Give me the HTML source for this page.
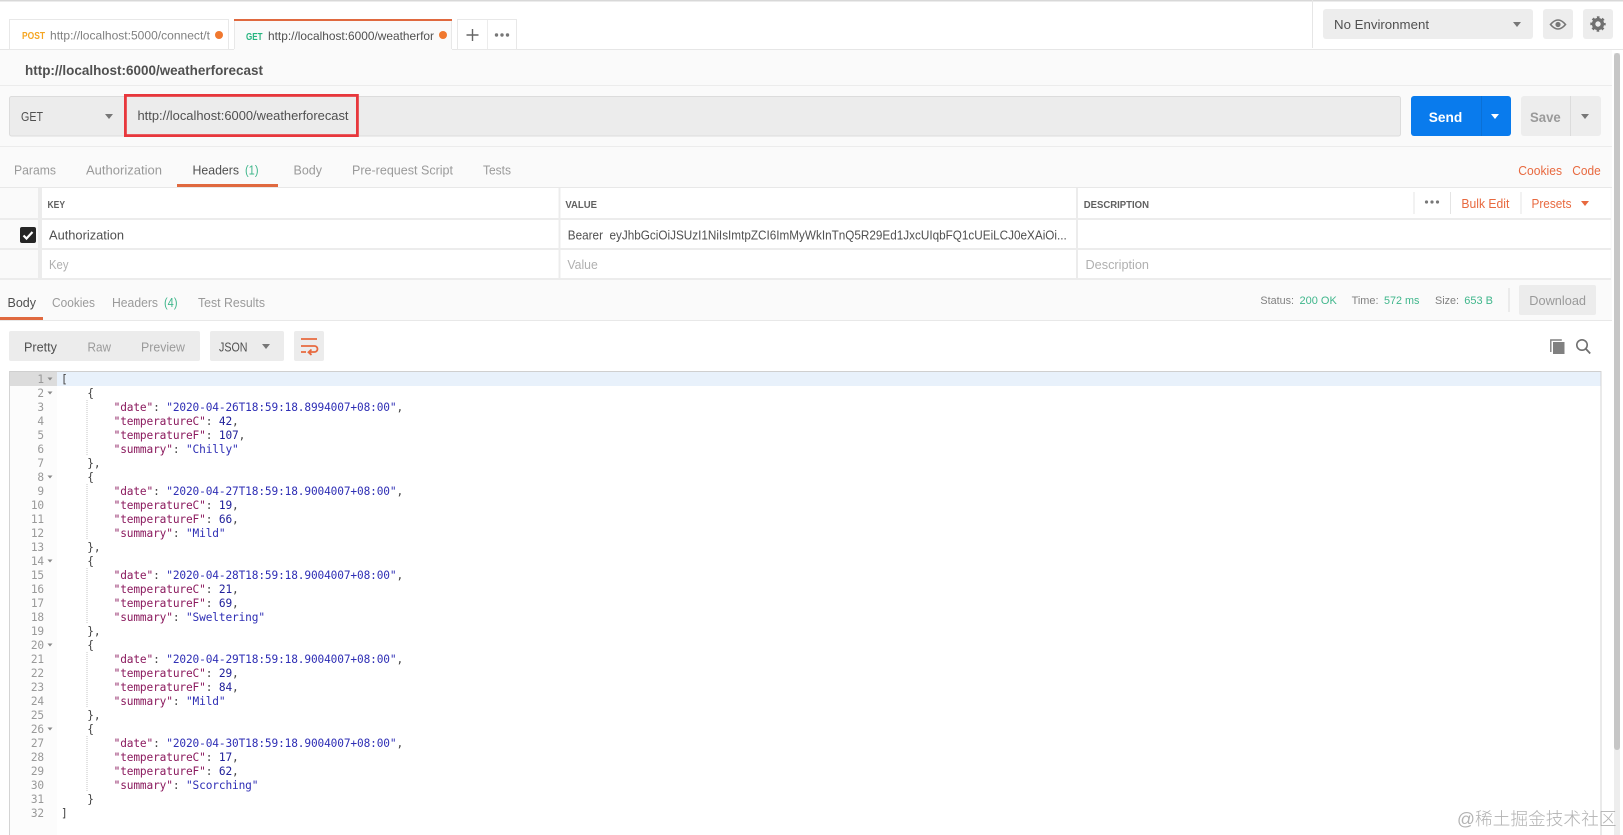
<!DOCTYPE html>
<html><head><meta charset="utf-8"><title>Postman</title>
<style>
html,body{margin:0;padding:0;width:1623px;height:835px;overflow:hidden;background:#fafafa}
body{filter:blur(.3px)}
svg{position:absolute;left:0;top:0}
text{font-family:"Liberation Sans",sans-serif;font-size:12.5px;fill:#808080;white-space:pre}
.d{fill:#505050}.l{fill:#b0b0b0}.m{fill:#9a9a9a}.o{fill:#e8693f}.g{fill:#3fb68b}
.h{font-size:10.5px;font-weight:bold;fill:#606060}
pre{position:absolute;margin:0;font-family:"DejaVu Sans Mono",monospace;font-size:11.15px;letter-spacing:-.13px;line-height:14px;top:373px;color:#444}
#n{left:9px;width:35px;text-align:right;color:#999}
#c{left:61px}
.k{color:#8b1a5e}.s{color:#2f2fb5}.v{color:#20209a}
#w{position:absolute;left:1457px;top:807px;font-family:"Liberation Sans","Noto Sans CJK SC",sans-serif;font-size:17.7px;line-height:24px;color:rgba(130,130,130,.62);white-space:nowrap;font-weight:300}
</style></head><body>
<svg width="1623" height="835" viewBox="0 0 1623 835">
<rect width="1623" height="835" fill="#fafafa"/>
<rect width="1623" height="49" fill="#fff"/>
<rect width="1623" height="1.5" fill="#d8d8d8"/>
<rect y="49" width="1623" height="1" fill="#e6e6e6"/>
<rect x="1312" y="0" width="1" height="48" fill="#e6e6e6"/>
<!-- tabs -->
<rect x="9.5" y="19.5" width="219" height="30" fill="#fff" stroke="#e8e8e8"/>
<rect x="234" y="19" width="218" height="31" fill="#fafafa"/>
<rect x="234" y="19" width="218" height="2" fill="#e0693f"/>
<rect x="234" y="21" width="1" height="28" fill="#e8e8e8"/><rect x="451" y="21" width="1" height="28" fill="#e8e8e8"/>
<rect x="457.5" y="19.5" width="59" height="30" fill="#fff" stroke="#e8e8e8"/>
<rect x="487" y="20" width="1" height="29" fill="#ececec"/>
<text x="22" y="39" font-weight="bold" style="font-size:10px;font-weight:bold;fill:#f5a623" textLength="23" lengthAdjust="spacingAndGlyphs">POST</text>
<text x="50" y="39.5" style="font-size:12px" textLength="160" lengthAdjust="spacingAndGlyphs">http://localhost:5000/connect/t</text>
<circle cx="219" cy="35" r="4" fill="#f0782f"/>
<text x="246" y="40" style="font-size:10px;font-weight:bold;fill:#26b47f" textLength="16.5" lengthAdjust="spacingAndGlyphs">GET</text>
<text x="268" y="40" class="d" style="font-size:12px" textLength="166" lengthAdjust="spacingAndGlyphs">http://localhost:6000/weatherfor</text>
<circle cx="443" cy="35" r="4" fill="#f0782f"/>
<path d="M472.5 29v12M466.5 35h12" stroke="#666" stroke-width="1.4" fill="none"/>
<g fill="#777"><circle cx="496.5" cy="35" r="1.7"/><circle cx="502" cy="35" r="1.7"/><circle cx="507.5" cy="35" r="1.7"/></g>
<!-- env -->
<rect x="1323" y="9" width="210" height="30" rx="3" fill="#ededed"/>
<text x="1334" y="29" class="d" style="font-size:12.5px" textLength="95" lengthAdjust="spacingAndGlyphs">No Environment</text>
<path d="M1513 22h8l-4 5z" fill="#777"/>
<rect x="1543" y="9" width="30" height="30" rx="3" fill="#ededed"/>
<path d="M1550.5 24.5Q1558 15.5 1565.5 24.5Q1558 33.5 1550.5 24.5Z" fill="none" stroke="#777" stroke-width="1.6"/><circle cx="1558" cy="24.5" r="2.6" fill="#777"/>
<rect x="1583" y="9" width="30" height="30" rx="3" fill="#ededed"/>
<circle cx="1598" cy="24" r="4.4" fill="none" stroke="#707070" stroke-width="3.4"/>
<circle cx="1598" cy="24" r="6.7" fill="none" stroke="#707070" stroke-width="2" stroke-dasharray="2.63 2.63" stroke-dashoffset="1.3"/>
<!-- title -->
<text x="25" y="75" style="font-size:13.5px;font-weight:bold;fill:#505050" textLength="238" lengthAdjust="spacingAndGlyphs">http://localhost:6000/weatherforecast</text>
<rect y="85" width="1612" height="1" fill="#ececec"/>
<!-- url row -->
<rect x="9.5" y="96.5" width="1391" height="39.5" rx="2" fill="#ececec" stroke="#dcdcdc"/>
<text x="21" y="121" class="d" style="font-size:13px" textLength="22" lengthAdjust="spacingAndGlyphs">GET</text>
<path d="M105 114h8l-4 5z" fill="#777"/>
<rect x="125.4" y="95.4" width="232" height="40.2" fill="none" stroke="#e8373c" stroke-width="2.8"/>
<text x="137.5" y="120" class="d" style="font-size:12.5px" textLength="211" lengthAdjust="spacingAndGlyphs">http://localhost:6000/weatherforecast</text>
<rect x="1411" y="96" width="100" height="40" rx="3" fill="#097bed"/>
<rect x="1481" y="96" width="1" height="40" fill="#0a70d6"/>
<text x="1428.7" y="122" style="font-size:14px;font-weight:bold;fill:#fff" textLength="33.5" lengthAdjust="spacingAndGlyphs">Send</text>
<path d="M1491 114h8l-4 5z" fill="#fff"/>
<rect x="1521" y="96" width="80" height="40" rx="3" fill="#ededed"/>
<rect x="1570" y="96" width="1" height="40" fill="#dcdcdc"/>
<text x="1530" y="122" style="font-size:14px;font-weight:bold;fill:#9a9a9a" textLength="30.7" lengthAdjust="spacingAndGlyphs">Save</text>
<path d="M1581 114h8l-4 5z" fill="#777"/>
<rect y="146" width="1612" height="1" fill="#ececec"/>
<!-- request tabs -->
<text x="14" y="174.5" class="m" textLength="42" lengthAdjust="spacingAndGlyphs">Params</text>
<text x="86" y="174.5" class="m" textLength="76" lengthAdjust="spacingAndGlyphs">Authorization</text>
<text x="192.5" y="174.5" class="d" textLength="46.5" lengthAdjust="spacingAndGlyphs">Headers</text>
<text x="245" y="174.5" class="g" textLength="13.5" lengthAdjust="spacingAndGlyphs">(1)</text>
<text x="293.5" y="174.5" class="m" textLength="28.5" lengthAdjust="spacingAndGlyphs">Body</text>
<text x="352" y="174.5" class="m" textLength="101" lengthAdjust="spacingAndGlyphs">Pre-request Script</text>
<text x="483" y="174.5" class="m" textLength="28" lengthAdjust="spacingAndGlyphs">Tests</text>
<text x="1518.3" y="175" class="o" textLength="43.7" lengthAdjust="spacingAndGlyphs">Cookies</text>
<text x="1572.3" y="175" class="o" textLength="28.4" lengthAdjust="spacingAndGlyphs">Code</text>
<rect y="187" width="1612" height="1" fill="#e8e8e8"/>
<rect x="177" y="184" width="101" height="3" fill="#e0693f"/>
<!-- table -->
<rect x="42" y="188" width="1568.5" height="30" fill="#fff"/>
<rect x="42" y="220" width="1568.5" height="28" fill="#fff"/>
<rect x="42" y="250" width="1568.5" height="28" fill="#fff"/>
<rect x="0" y="218" width="1611" height="2" fill="#ececec"/>
<rect x="0" y="248" width="1611" height="2" fill="#ececec"/>
<rect x="0" y="278" width="1611" height="2" fill="#ececec"/>
<rect x="38" y="188" width="4" height="92" fill="#ececec"/>
<rect x="558.5" y="188" width="2" height="92" fill="#ececec"/>
<rect x="1076" y="188" width="2" height="92" fill="#ececec"/>
<text x="47.5" y="208" class="h" textLength="17.5" lengthAdjust="spacingAndGlyphs">KEY</text>
<text x="565.4" y="208" class="h" textLength="31.6" lengthAdjust="spacingAndGlyphs">VALUE</text>
<text x="1083.7" y="208" class="h" textLength="65.3" lengthAdjust="spacingAndGlyphs">DESCRIPTION</text>
<rect x="1413.5" y="192" width="1" height="22" fill="#e4e4e4"/>
<rect x="1450" y="192" width="1" height="22" fill="#e4e4e4"/>
<rect x="1520.5" y="192" width="1" height="22" fill="#e4e4e4"/>
<g fill="#777"><circle cx="1426.5" cy="202" r="1.6"/><circle cx="1432" cy="202" r="1.6"/><circle cx="1437.5" cy="202" r="1.6"/></g>
<text x="1461.4" y="208" class="o" textLength="48" lengthAdjust="spacingAndGlyphs">Bulk Edit</text>
<text x="1531.5" y="208" class="o" textLength="40" lengthAdjust="spacingAndGlyphs">Presets</text>
<path d="M1581 201h8l-4 5z" fill="#e8693f"/>
<rect x="20" y="227" width="16" height="16" rx="2" fill="#262626"/>
<path d="M23.5 235.5l3 3 6-6.5" stroke="#fff" stroke-width="2.2" fill="none"/>
<text x="49" y="239.5" class="d" textLength="75" lengthAdjust="spacingAndGlyphs">Authorization</text>
<text x="567.8" y="239.5" class="d" textLength="499" lengthAdjust="spacingAndGlyphs">Bearer  eyJhbGciOiJSUzI1NiIsImtpZCI6ImMyWkInTnQ5R29Ed1JxcUIqbFQ1cUEiLCJ0eXAiOi...</text>
<text x="49" y="269" class="l" textLength="19.5" lengthAdjust="spacingAndGlyphs">Key</text>
<text x="567.4" y="269" class="l" textLength="30.4" lengthAdjust="spacingAndGlyphs">Value</text>
<text x="1085.5" y="269" class="l" textLength="63.5" lengthAdjust="spacingAndGlyphs">Description</text>
<!-- response tabs -->
<text x="7.5" y="307" class="d" textLength="28.5" lengthAdjust="spacingAndGlyphs">Body</text>
<text x="52" y="307" class="m" textLength="43" lengthAdjust="spacingAndGlyphs">Cookies</text>
<text x="112" y="307" class="m" textLength="46" lengthAdjust="spacingAndGlyphs">Headers</text>
<text x="164" y="307" class="g" textLength="13.5" lengthAdjust="spacingAndGlyphs">(4)</text>
<text x="198" y="307" class="m" textLength="67" lengthAdjust="spacingAndGlyphs">Test Results</text>
<text x="1260.4" y="304" class="m" style="font-size:11px;fill:#808080" textLength="33.6" lengthAdjust="spacingAndGlyphs">Status:</text>
<text x="1299.5" y="304" class="g" style="font-size:11px" textLength="37.3" lengthAdjust="spacingAndGlyphs">200 OK</text>
<text x="1351.6" y="304" style="font-size:11px" textLength="26.9" lengthAdjust="spacingAndGlyphs">Time:</text>
<text x="1384" y="304" class="g" style="font-size:11px" textLength="35.4" lengthAdjust="spacingAndGlyphs">572 ms</text>
<text x="1435" y="304" style="font-size:11px" textLength="24" lengthAdjust="spacingAndGlyphs">Size:</text>
<text x="1464.3" y="304" class="g" style="font-size:11px" textLength="28.7" lengthAdjust="spacingAndGlyphs">653 B</text>
<rect x="1508.5" y="288" width="1" height="24" fill="#dcdcdc"/>
<rect x="1519" y="285" width="77" height="30" rx="2" fill="#ececec"/>
<text x="1529.3" y="305" class="m" textLength="56.7" lengthAdjust="spacingAndGlyphs">Download</text>
<rect y="320" width="1612" height="1" fill="#e8e8e8"/>
<rect x="0" y="317" width="43" height="3" fill="#e0693f"/>
<!-- body area -->
<rect x="0" y="321" width="1612" height="514" fill="#fff"/>
<rect x="9" y="331" width="191" height="30" rx="2" fill="#ececec"/>
<text x="24" y="351.5" class="d" textLength="33" lengthAdjust="spacingAndGlyphs">Pretty</text>
<text x="87.5" y="351.5" class="m" textLength="23.5" lengthAdjust="spacingAndGlyphs">Raw</text>
<text x="141" y="351.5" class="m" textLength="44" lengthAdjust="spacingAndGlyphs">Preview</text>
<rect x="210" y="331" width="74" height="30" rx="2" fill="#ececec"/>
<text x="219" y="351.5" class="d" textLength="28.5" lengthAdjust="spacingAndGlyphs">JSON</text>
<path d="M262 344h8l-4 5z" fill="#777"/>
<rect x="294" y="331" width="30" height="30" rx="2" fill="#ececec"/>
<path d="M301 339h16M301 346h13.5a3 3 0 0 1 0 6H309M311.5 349.5l-3 2.7 3 2.7M301 352h5" stroke="#e8693f" stroke-width="1.8" fill="none"/>
<!-- copy + search -->
<path d="M1550.8 352V340h11" stroke="#808080" stroke-width="1.4" fill="none"/>
<rect x="1553" y="342" width="11.5" height="12" fill="#808080"/>
<circle cx="1582" cy="345" r="5.2" fill="none" stroke="#707070" stroke-width="1.6"/>
<path d="M1586 349l4.2 4.5" stroke="#707070" stroke-width="1.8"/>
<!-- editor -->
<rect x="9" y="371" width="1592" height="1" fill="#cfcfcf"/>
<rect x="9" y="371" width="1" height="464" fill="#d4d4d4"/>
<rect x="1600.5" y="371" width="1" height="464" fill="#d4d4d4"/>
<rect x="10" y="372" width="47" height="463" fill="#fcfcfc"/>
<rect x="10" y="372" width="47" height="14" fill="#dcdcdc"/>
<rect x="57" y="372" width="1543.5" height="14" fill="#e8f1fb"/>
<g fill="#8a8a8a">
<path d="M47.5 377.5h5l-2.5 3z"/><path d="M47.5 391.5h5l-2.5 3z"/><path d="M47.5 475.5h5l-2.5 3z"/><path d="M47.5 559.5h5l-2.5 3z"/><path d="M47.5 643.5h5l-2.5 3z"/><path d="M47.5 727.5h5l-2.5 3z"/>
</g>
<g stroke="#c4c4c4" stroke-width="1" stroke-dasharray="1 1">
<path d="M87 400v56M87 484v56M87 568v56M87 652v56M87 736v56"/>
</g>
<!-- scrollbar -->
<rect x="1612" y="50" width="11" height="785" fill="#fff"/>
<rect x="1614" y="53" width="6" height="782" fill="#ededed"/>
<rect x="1614" y="53" width="6" height="697" rx="3" fill="#c6c6c6"/>
</svg>
<pre id="n">1
2
3
4
5
6
7
8
9
10
11
12
13
14
15
16
17
18
19
20
21
22
23
24
25
26
27
28
29
30
31
32</pre>
<pre id="c">[
    {
        <span class="k">"date"</span>: <span class="s">"2020-04-26T18:59:18.8994007+08:00"</span>,
        <span class="k">"temperatureC"</span>: <span class="v">42</span>,
        <span class="k">"temperatureF"</span>: <span class="v">107</span>,
        <span class="k">"summary"</span>: <span class="s">"Chilly"</span>
    },
    {
        <span class="k">"date"</span>: <span class="s">"2020-04-27T18:59:18.9004007+08:00"</span>,
        <span class="k">"temperatureC"</span>: <span class="v">19</span>,
        <span class="k">"temperatureF"</span>: <span class="v">66</span>,
        <span class="k">"summary"</span>: <span class="s">"Mild"</span>
    },
    {
        <span class="k">"date"</span>: <span class="s">"2020-04-28T18:59:18.9004007+08:00"</span>,
        <span class="k">"temperatureC"</span>: <span class="v">21</span>,
        <span class="k">"temperatureF"</span>: <span class="v">69</span>,
        <span class="k">"summary"</span>: <span class="s">"Sweltering"</span>
    },
    {
        <span class="k">"date"</span>: <span class="s">"2020-04-29T18:59:18.9004007+08:00"</span>,
        <span class="k">"temperatureC"</span>: <span class="v">29</span>,
        <span class="k">"temperatureF"</span>: <span class="v">84</span>,
        <span class="k">"summary"</span>: <span class="s">"Mild"</span>
    },
    {
        <span class="k">"date"</span>: <span class="s">"2020-04-30T18:59:18.9004007+08:00"</span>,
        <span class="k">"temperatureC"</span>: <span class="v">17</span>,
        <span class="k">"temperatureF"</span>: <span class="v">62</span>,
        <span class="k">"summary"</span>: <span class="s">"Scorching"</span>
    }
]</pre>
<div id="w">@稀土掘金技术社区</div>
</body></html>
